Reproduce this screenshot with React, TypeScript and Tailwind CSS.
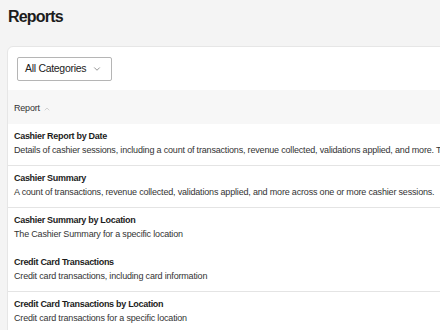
import { ChevronDown, ChevronUp } from 'lucide-react'

const reports = [
  {
    title: 'Cashier Report by Date',
    desc: 'Details of cashier sessions, including a count of transactions, revenue collected, validations applied, and more. This report can be filtered by date.',
    line: true,
  },
  {
    title: 'Cashier Summary',
    desc: 'A count of transactions, revenue collected, validations applied, and more across one or more cashier sessions.',
    line: true,
  },
  {
    title: 'Cashier Summary by Location',
    desc: 'The Cashier Summary for a specific location',
    line: false,
  },
  {
    title: 'Credit Card Transactions',
    desc: 'Credit card transactions, including card information',
    line: true,
  },
  {
    title: 'Credit Card Transactions by Location',
    desc: 'Credit card transactions for a specific location',
    line: false,
  },
]

function App() {
  return (
    <div
      className="w-[440px] h-[330px] overflow-hidden bg-[#f4f4f4] text-[#1c1c1c]"
      style={{ fontFamily: '"Liberation Sans", Arial, sans-serif' }}
    >
      <h1 className="pl-[8px] pt-[7px] h-[46px] text-[16px] font-bold leading-[20px] tracking-[-0.8px]">Reports</h1>

      <div className="ml-[7px] w-[700px] bg-white border border-[#e6e6e6] rounded-tl-[6px]">
        <div className="h-[43px] flex items-center pl-[9px]">
          <button className="h-[24px] w-[95px] border border-[#b5b5b5] rounded-[2px] flex items-center pl-[7px] gap-[6px] text-[10.5px] tracking-[-0.3px] text-[#222] bg-white whitespace-nowrap">
            All Categories
            <ChevronDown size={10} strokeWidth={1.5} className="text-[#555]" />
          </button>
        </div>

        <div className="h-[34px] bg-[#f7f7f7] flex items-center pt-[3px] pl-[6px] gap-[3px] text-[9px] tracking-[-0.2px] text-[#333]">
          Report
          <ChevronUp size={8} strokeWidth={1.5} className="text-[#aaa]" />
        </div>

        {reports.map(r => (
          <div
            key={r.title}
            className={`h-[42px] pl-[6px] pt-[5px] border-b ${r.line ? 'border-[#e4e4e4]' : 'border-transparent'}`}
          >
            <div className="text-[9px] font-bold leading-[14px] tracking-[-0.3px] text-[#1c1c1c]">{r.title}</div>
            <div className="text-[9px] leading-[14px] tracking-[-0.18px] text-[#333] whitespace-nowrap">{r.desc}</div>
          </div>
        ))}
      </div>
    </div>
  )
}

export default App
